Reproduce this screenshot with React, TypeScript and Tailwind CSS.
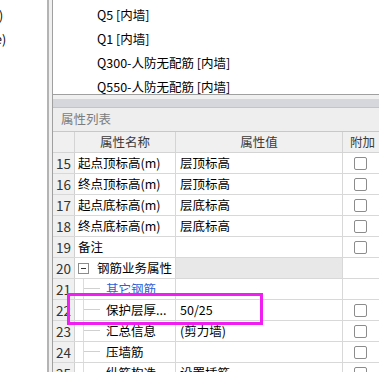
import React from "react";

type Row = {
  n: number;
  name: string;
  val?: string;
  chk: boolean;
  kind?: "group" | "child" | "blue";
};

const rows: Row[] = [
  { n: 15, name: "起点顶标高(m)", val: "层顶标高", chk: true },
  { n: 16, name: "终点顶标高(m)", val: "层顶标高", chk: true },
  { n: 17, name: "起点底标高(m)", val: "层底标高", chk: true },
  { n: 18, name: "终点底标高(m)", val: "层底标高", chk: true },
  { n: 19, name: "备注", val: "", chk: true },
  { n: 20, name: "钢筋业务属性", val: "", chk: false, kind: "group" },
  { n: 21, name: "其它钢筋", val: "", chk: false, kind: "blue" },
  { n: 22, name: "保护层厚...", val: "50/25", chk: true, kind: "child" },
  { n: 23, name: "汇总信息", val: "(剪力墙)", chk: true, kind: "child" },
  { n: 24, name: "压墙筋", val: "", chk: true, kind: "child" },
  { n: 25, name: "纵筋构造", val: "设置插筋", chk: true, kind: "child" },
];

function Check() {
  return <div className="w-[13px] h-[13px] border border-[#8c8c8c] rounded-[2px] bg-white" />;
}

function NameCell({ r }: { r: Row }) {
  if (r.kind === "group") {
    return (
      <div className="flex items-center h-full pl-[3px]">
        <div className="w-[11px] h-[11px] border border-[#8c8c8c] flex items-center justify-center bg-white">
          <div className="w-[5px] h-px bg-[#333]" />
        </div>
        <span className="ml-[8px] text-black">{r.name}</span>
      </div>
    );
  }
  if (r.kind === "child" || r.kind === "blue") {
    return (
      <div className="flex items-stretch h-full pl-[8px]">
        <div className="w-[17px] flex flex-col border-l border-[#dcdcdc]">
          <div className="h-1/2 border-b border-[#d0d0d0]" />
        </div>
        <span
          className={
            "ml-[6px] self-center whitespace-nowrap " +
            (r.kind === "blue" ? "text-[#2b5fd9]" : "text-black")
          }
        >
          {r.name}
        </span>
      </div>
    );
  }
  return (
    <div className="flex items-center h-full pl-[3px] text-black whitespace-nowrap">{r.name}</div>
  );
}

export default function App() {
  return (
    <div
      className="w-[379px] h-[372px] overflow-hidden flex bg-white relative text-[12.5px]"
      style={{ fontFamily: '"Noto Sans CJK SC", "Noto Sans", sans-serif' }}
    >
      {/* left panel */}
      <div className="w-[47px] shrink-0 bg-white overflow-hidden pt-[3px] text-black">
        <div className="h-[24px] leading-[24px] whitespace-nowrap">
          <span className="-ml-[1px]">)</span>
        </div>
        <div className="h-[24px] leading-[24px] whitespace-nowrap">
          <span className="-ml-[5px]">e)</span>
        </div>
      </div>
      <div className="w-[2px] shrink-0 bg-[#b4b4b4]" />
      <div className="w-[3px] shrink-0 bg-[#f0f0f0]" />
      <div className="flex-1 flex flex-col border-l border-[#a0a0a0] min-w-0">
        {/* upper list */}
        <div className="h-[95px] shrink-0 bg-white border-b border-[#a0a0a0] pt-[3px] pl-[44px] text-black">
          <div className="h-[24px] leading-[24px] whitespace-nowrap">Q5 [内墙]</div>
          <div className="h-[24px] leading-[24px] whitespace-nowrap">Q1 [内墙]</div>
          <div className="h-[24px] leading-[24px] whitespace-nowrap">Q300-人防无配筋 [内墙]</div>
          <div className="h-[24px] leading-[24px] whitespace-nowrap">Q550-人防无配筋 [内墙]</div>
        </div>
        <div className="h-[4px] shrink-0 bg-[#f0f0f0]" />
        <div className="h-[9px] shrink-0 bg-[#d6d7dc] border-b border-[#c4c4c8]" />
        <div className="h-[24px] shrink-0 bg-[#eeeeee] border-b border-[#c8c8c8] pl-[8px] flex items-center text-[#7c7c7c]">
          属性列表
        </div>
        {/* table header */}
        <div className="grid grid-cols-[22px_101px_167px_1fr] h-[21px] shrink-0 bg-[#f0f0f0] border-b border-[#d4d4d4] text-[#3a3a3a]">
          <div className="border-r border-[#d4d4d4]" />
          <div className="border-r border-[#d4d4d4] flex items-center justify-center">属性名称</div>
          <div className="border-r border-[#d4d4d4] flex items-center justify-center">属性值</div>
          <div className="flex items-center pl-[7px] whitespace-nowrap">附加</div>
        </div>
        {rows.map((r) => (
          <div
            key={r.n}
            className="grid grid-cols-[22px_101px_167px_1fr] h-[21px] shrink-0 border-b border-[#d8d8d8]"
          >
            <div className="bg-[#f0f0f0] border-r border-[#d0d0d0] flex items-center justify-center text-[13.5px] text-[#333]">
              {r.n}
            </div>
            <div className="border-r border-[#d8d8d8] bg-white overflow-hidden">
              <NameCell r={r} />
            </div>
            <div
              className={
                "border-r border-[#d8d8d8] flex items-center pl-[4px] text-black whitespace-nowrap " +
                (r.kind === "group" ? "bg-[#e8e8e8]" : "bg-white")
              }
            >
              {r.val}
            </div>
            <div className="flex items-center justify-center pr-[1px] bg-white">
              {r.chk ? <Check /> : null}
            </div>
          </div>
        ))}
      </div>
      {/* highlight overlay */}
      <div className="absolute left-[67px] top-[293px] w-[196px] h-[32px] border-[3px] border-[#f01ef0] pointer-events-none" />
    </div>
  );
}
